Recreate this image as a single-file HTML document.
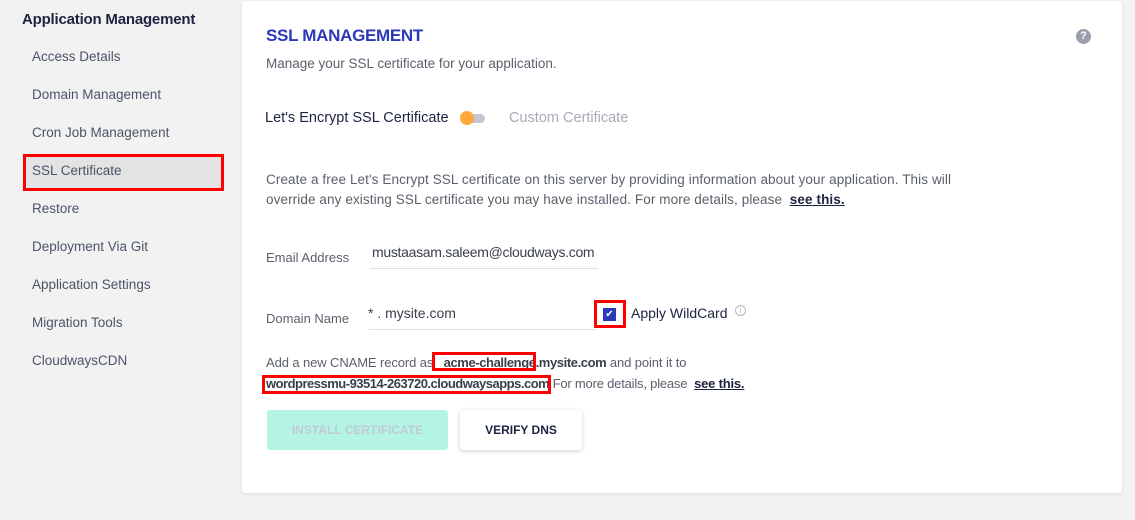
<!DOCTYPE html>
<html><head><meta charset="utf-8"><style>
*{margin:0;padding:0;box-sizing:border-box}
body{width:1135px;height:520px;background:#f2f2f2;font-family:"Liberation Sans",sans-serif;position:relative;overflow:hidden;color:#4a4f5c}
.a{position:absolute;white-space:nowrap}
.nav{font-size:13.5px;color:#4b5567;left:32px}
.card{position:absolute;left:242px;top:1px;width:880px;height:492px;background:#fff;border-radius:4px;box-shadow:0 1px 3px rgba(0,0,0,.08)}
.red{position:absolute;border:3px solid #f00}
.t13{font-size:13px;color:#5a5f6b}
u{color:#1d2340;font-weight:bold}
</style></head><body>
<div class="a" style="left:22px;top:11px;font-size:15px;color:#1d2340;font-weight:bold;letter-spacing:-.2px">Application Management</div>
<div class="a nav" style="top:49px">Access Details</div>
<div class="a nav" style="top:87px">Domain Management</div>
<div class="a nav" style="top:125px">Cron Job Management</div>
<div style="position:absolute;left:23px;top:154px;width:201px;height:37px;background:#e3e3e3;border:3px solid #f00"></div>
<div class="a nav" style="top:163px">SSL Certificate</div>
<div class="a nav" style="top:201px">Restore</div>
<div class="a nav" style="top:239px">Deployment Via Git</div>
<div class="a nav" style="top:277px">Application Settings</div>
<div class="a nav" style="top:315px">Migration Tools</div>
<div class="a nav" style="top:353px">CloudwaysCDN</div>

<div class="card"></div>
<div class="a" style="left:266px;top:26px;font-size:17px;color:#2b38b8;font-weight:bold;letter-spacing:-.3px">SSL MANAGEMENT</div>
<div style="position:absolute;left:1076px;top:29px;width:15px;height:15px;border-radius:50%;background:#9aa0ab;color:#fff;font-size:11px;font-weight:bold;text-align:center;line-height:15px">?</div>
<div class="a t13" style="left:266px;top:56px;font-size:13.5px">Manage your SSL certificate for your application.</div>

<div class="a" style="left:265px;top:110px;font-size:14.5px;color:#1d2340">Let's Encrypt SSL Certificate</div>
<div style="position:absolute;left:462px;top:114px;width:23px;height:9px;border-radius:5px;background:#c4c7d2"></div>
<div style="position:absolute;left:460px;top:111px;width:14px;height:14px;border-radius:50%;background:#ffa93a"></div>
<div class="a" style="left:509px;top:110px;font-size:14.5px;color:#a7abb8">Custom Certificate</div>

<div class="a t13" style="left:266px;top:170px;font-size:13.5px;letter-spacing:.1px;line-height:20px">Create a free Let's Encrypt SSL certificate on this server by providing information about your application. This will<br>override any existing SSL certificate you may have installed. For more details, please&nbsp; <u>see this.</u></div>

<div class="a t13" style="left:266px;top:250px">Email Address</div>
<div class="a" style="left:372px;top:244px;font-size:14px;color:#3a3f4c;letter-spacing:-.3px;width:226px;overflow:hidden">mustaasam.saleem@cloudways.com</div>
<div style="position:absolute;left:370px;top:268px;width:228px;height:1px;background:#dde0e6"></div>

<div class="a t13" style="left:266px;top:311px">Domain Name</div>
<div class="a" style="left:368px;top:305px;font-size:14px;color:#3a3f4c">* . mysite.com</div>
<div style="position:absolute;left:369px;top:329px;width:228px;height:1px;background:#dde0e6"></div>
<div class="red" style="left:594px;top:300px;width:32px;height:28px"></div>
<div style="position:absolute;left:603px;top:308px;width:13px;height:13px;background:#2b38b8;color:#fff;font-size:10px;text-align:center;line-height:13px">✔</div>
<div class="a" style="left:631px;top:305px;font-size:14px;color:#1d2340">Apply WildCard</div>
<div style="position:absolute;left:735px;top:305px;width:11px;height:11px;border:1px solid #b5b9c3;border-radius:50%;color:#b5b9c3;font-size:8px;text-align:center;line-height:9px">i</div>

<div class="a t13" style="left:266px;top:355px;letter-spacing:-.1px">Add a new CNAME record as <b style="color:#3a3f4c;letter-spacing:-.4px">_acme-challenge.mysite.com</b> and point it to</div>
<div class="red" style="left:432px;top:352px;width:104px;height:19px"></div>
<div class="a t13" style="left:266px;top:376px;letter-spacing:-.2px"><b style="color:#3a3f4c;letter-spacing:-.5px">wordpressmu-93514-263720.cloudwaysapps.com</b> For more details, please&nbsp; <u>see this.</u></div>
<div class="red" style="left:262px;top:375px;width:289px;height:19px"></div>

<div style="position:absolute;left:267px;top:410px;width:181px;height:40px;background:#b3f5e2;border-radius:3px;color:#c1c9d6;font-size:12px;font-weight:bold;text-align:center;line-height:40px">INSTALL CERTIFICATE</div>
<div style="position:absolute;left:460px;top:410px;width:122px;height:40px;background:#fff;border-radius:3px;box-shadow:0 1px 4px rgba(0,0,0,.2);color:#1d2340;font-size:12px;font-weight:bold;text-align:center;line-height:40px">VERIFY DNS</div>
</body></html>
